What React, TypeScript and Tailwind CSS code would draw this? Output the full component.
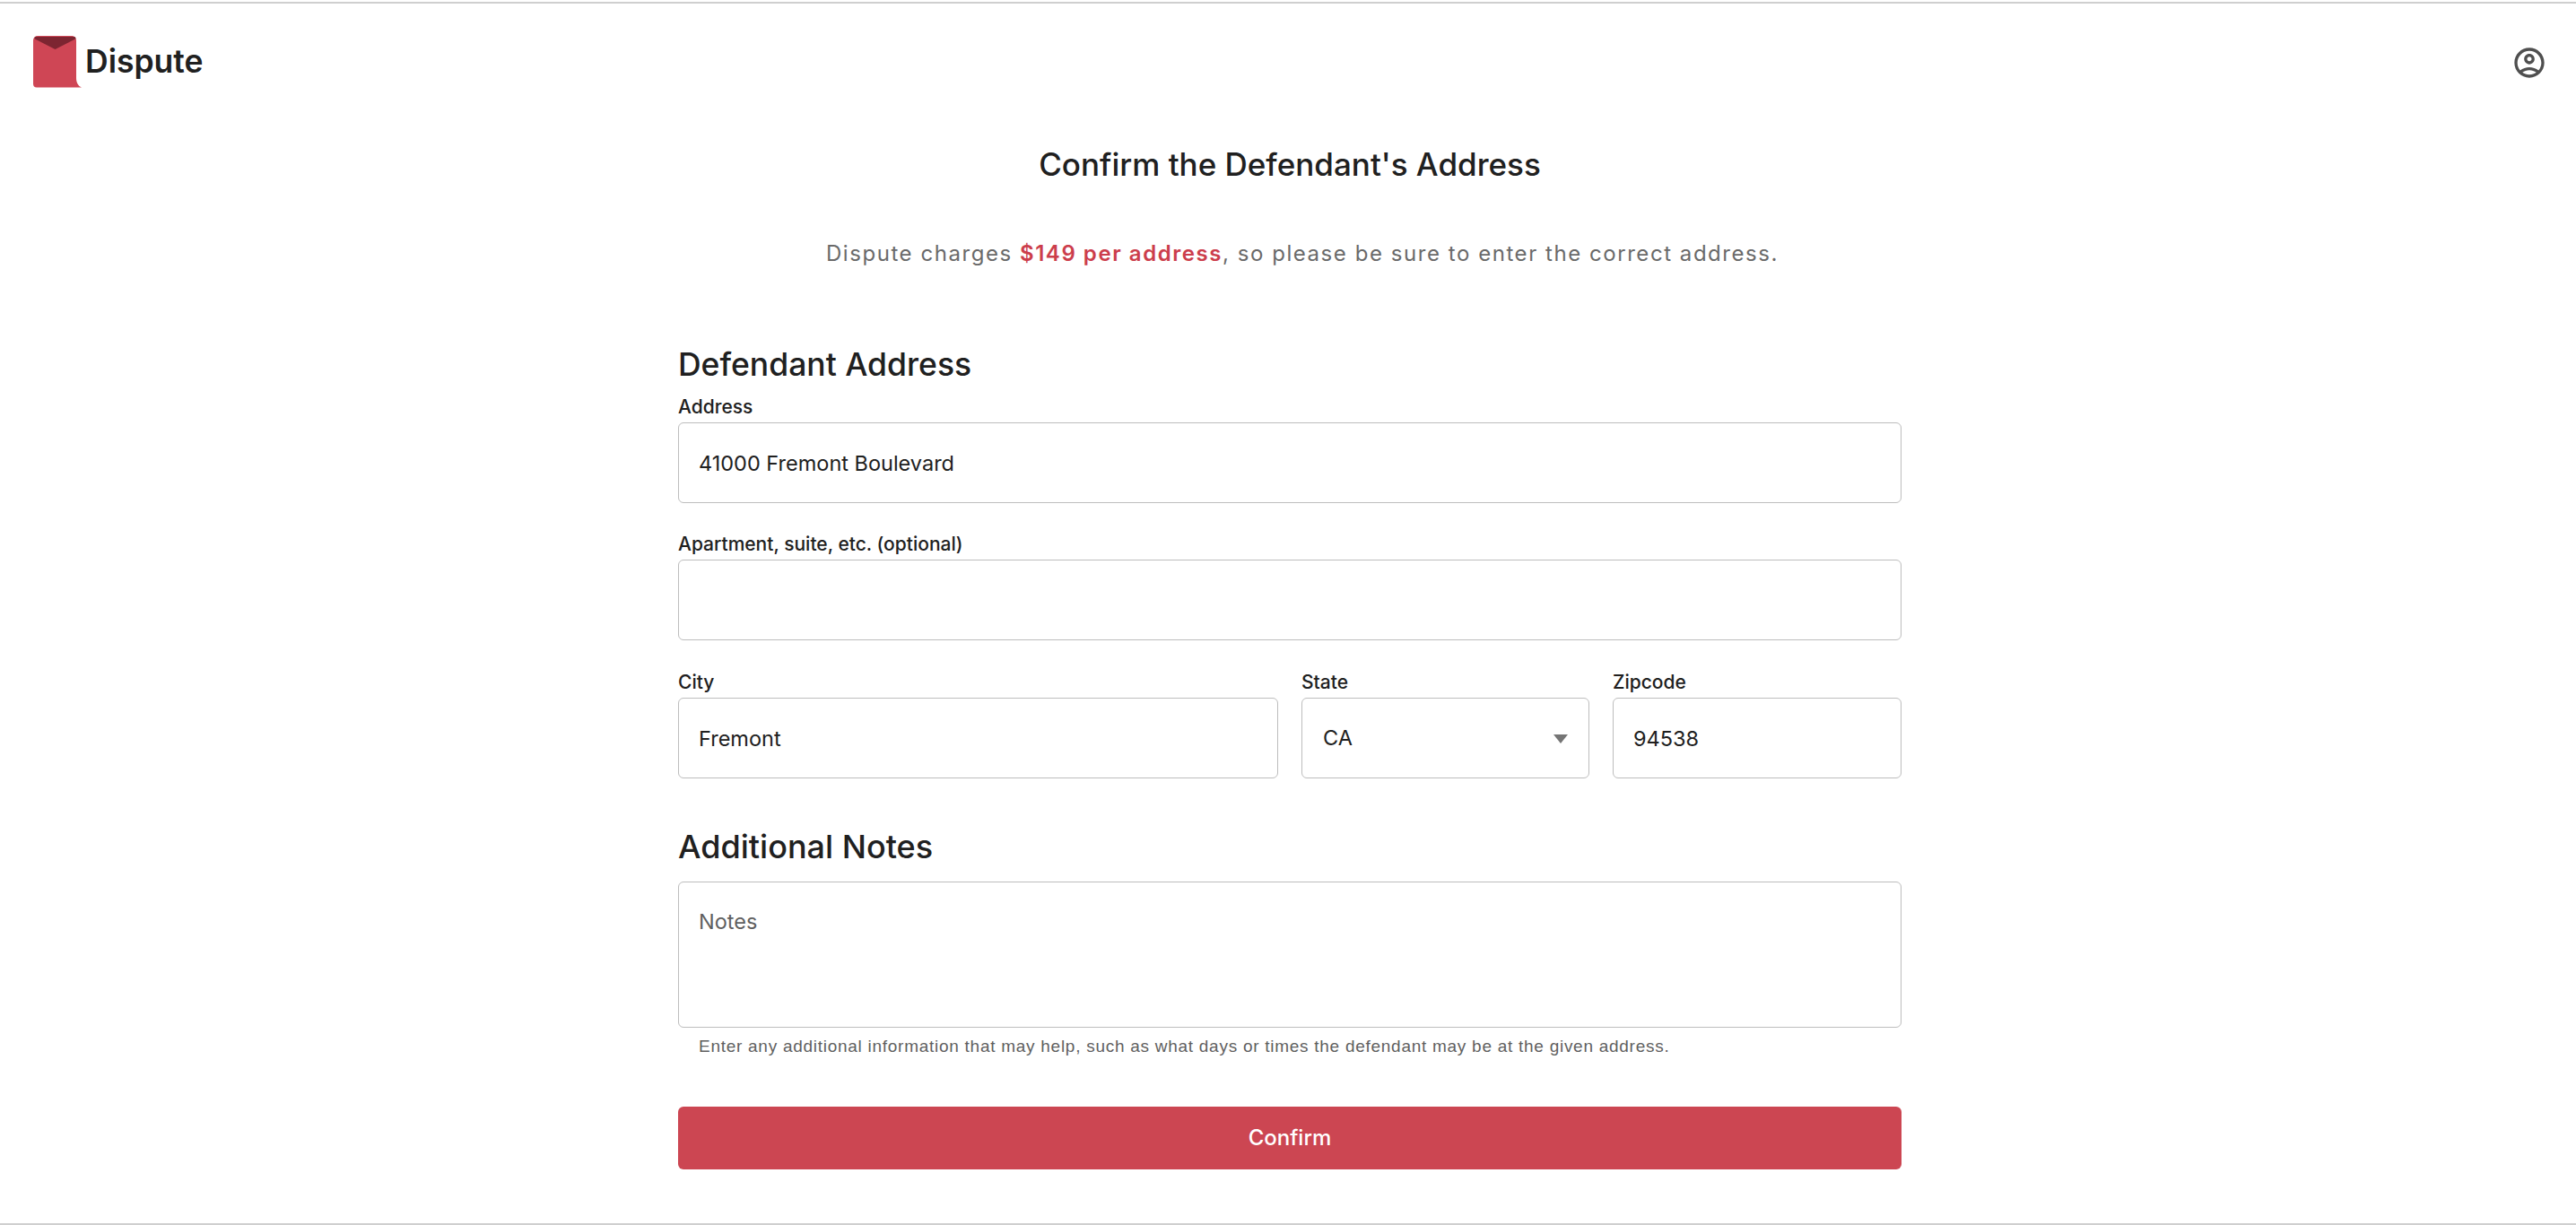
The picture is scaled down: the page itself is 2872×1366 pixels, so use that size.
const font = "font-['Inter','Noto_Sans',sans-serif]";

function Logo() {
  return (
    <svg viewBox="0 0 54 58" className="h-[58px] w-[54px] shrink-0">
      <path d="M5 0h38a5 5 0 0 1 5 5v42c0 5 2 9 6 10.500H4a4 4 0 0 1-4-4V5a5 5 0 0 1 5-5z" fill="#cf4655" />
      <path d="M3 1h43a1.500 1.500 0 0 1 1 2.500L24.500 15 2 3.500A1.400 1.400 0 0 1 3 1z" fill="#7d2531" />
    </svg>
  );
}

function UserIcon() {
  return (
    <svg viewBox="0 0 24 24" fill="#4f4f4f" className="h-10 w-10">
      <path d="M12 2C6.480 2 2 6.480 2 12s4.480 10 10 10 10-4.480 10-10S17.520 2 12 2zM7.350 18.500C8.660 17.560 10.260 17 12 17s3.340.56 4.650 1.500c-1.310.94-2.910 1.500-4.650 1.500s-3.340-.56-4.650-1.500zm10.790-1.380C16.450 15.800 14.320 15 12 15s-4.450.8-6.140 2.120C4.700 15.730 4 13.950 4 12c0-4.420 3.580-8 8-8s8 3.580 8 8c0 1.950-.7 3.730-1.860 5.120z" />
      <path d="M12 6c-1.930 0-3.500 1.570-3.500 3.500S10.070 13 12 13s3.500-1.570 3.500-3.500S13.930 6 12 6zm0 5c-.83 0-1.500-.67-1.500-1.500S11.170 8 12 8s1.500.67 1.500 1.500S12.830 11 12 11z" />
    </svg>
  );
}

function Field({ label, value, className }: { label: string; value?: string; className?: string }) {
  return (
    <label className={`flex flex-col ${className ?? ""}`}>
      <span className="h-[26px] text-[21px] leading-[26px] font-medium text-[#202020]">{label}</span>
      <input
        readOnly
        defaultValue={value}
        className="mt-[4px] h-[90px] w-full rounded-md border border-[#bdbdbd] bg-white px-[22px] text-[23.500px] text-[#202020] outline-none"
      />
    </label>
  );
}

export default function App() {
  return (
    <div className={`${font} flex h-[1366px] flex-col overflow-hidden bg-white pt-[2px]`}>
      <div className="h-[2px] bg-[#cfcfcf]" />

      {/* header */}
      <header className="flex h-[157px] items-start justify-between pl-[37px] pr-[32px] pt-[36px]">
        <div className="flex items-center gap-[4px]">
          <Logo />
          <span className="text-[35.500px] leading-[58px] font-semibold text-[#202020]">Dispute</span>
        </div>
        <div className="pt-[10px]">
          <UserIcon />
        </div>
      </header>

      <main className="flex flex-1 flex-col items-center pl-[4px]">
        <h1 className="text-[35px] leading-[44px] font-medium text-[#202020]">Confirm the Defendant's Address</h1>
        <p className="mt-[63px] ml-[28px] text-[24px] leading-[30px] tracking-[1.550px] text-[#6a6a6a]">
          Dispute charges <span className="font-semibold text-[#cc3e4c]">$149 per address</span>, so please be sure to enter the correct address.
        </p>

        <form className="mt-[87px] flex w-[1364px] flex-col">
          <h2 className="text-[35.500px] leading-[44px] font-medium text-[#202020]">Defendant Address</h2>
          <Field className="mt-[12px]" label="Address" value="41000 Fremont Boulevard" />
          <Field className="mt-[33px]" label="Apartment, suite, etc. (optional)" />

          <div className="mt-[34px] flex gap-[26px]">
            <Field className="w-[669px]" label="City" value="Fremont" />
            <label className="flex w-[321px] flex-col">
              <span className="h-[26px] text-[21px] leading-[26px] font-medium text-[#202020]">State</span>
              <div className="relative mt-[4px]">
                <select
                  defaultValue="CA"
                  className="h-[90px] w-full appearance-none rounded-md border border-[#bdbdbd] bg-white px-[23px] text-[23.500px] text-[#202020] outline-none"
                >
                  <option value="CA">CA</option>
                </select>
                <svg viewBox="0 0 16 10" className="absolute right-[24px] top-[41px] h-[10px] w-[16px]">
                  <path d="M0 0h16L8 10z" fill="#757575" />
                </svg>
              </div>
            </label>
            <Field className="w-[322px]" label="Zipcode" value="94538" />
          </div>

          <h2 className="mt-[54px] text-[36px] leading-[44px] font-medium text-[#202020]">Additional Notes</h2>
          <textarea
            readOnly
            placeholder="Notes"
            className="mt-[17px] h-[163px] w-full resize-none rounded-md border border-[#bdbdbd] bg-white px-[22px] pt-[26px] text-[23.500px] text-[#202020] outline-none placeholder:text-[#5f5f5f]"
          />
          <p className="mt-[10px] pl-[23px] font-['Liberation_Sans',sans-serif] text-[19px] leading-[22px] tracking-[0.730px] text-[#5f5f5f]">
            Enter any additional information that may help, such as what days or times the defendant may be at the given address.
          </p>
          <button
            type="button"
            className="mt-[56px] h-[70px] w-full rounded-md bg-[#cc4652] text-[24px] font-medium text-white"
          >
            Confirm
          </button>
        </form>
      </main>

      <div className="h-[2px] bg-[#cfcfcf]" />
    </div>
  );
}
